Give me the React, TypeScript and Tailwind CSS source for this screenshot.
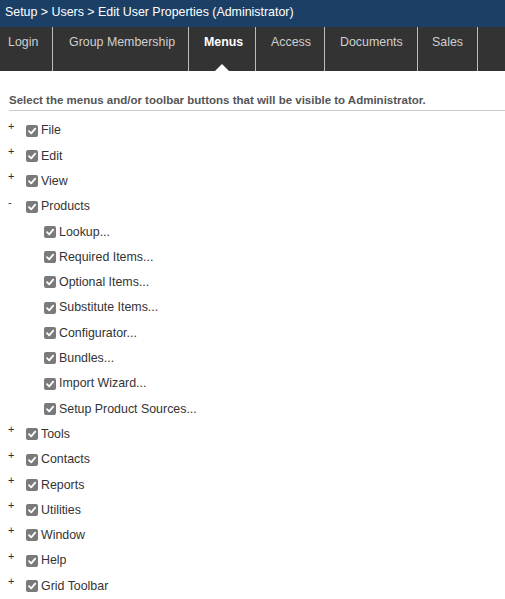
import React from "react";

const tabs = [
  { label: "Login", w: 52, pl: 8 },
  { label: "Group Membership", w: 135, pl: 16 },
  { label: "Menus", w: 66, pl: 15, active: true },
  { label: "Access", w: 68, pl: 15 },
  { label: "Documents", w: 92, pl: 15 },
  { label: "Sales", w: 59, pl: 14 },
];

const before = ["File", "Edit", "View"];
const subs = [
  "Lookup...",
  "Required Items...",
  "Optional Items...",
  "Substitute Items...",
  "Configurator...",
  "Bundles...",
  "Import Wizard...",
  "Setup Product Sources...",
];
const after = ["Tools", "Contacts", "Reports", "Utilities", "Window", "Help", "Grid Toolbar"];

function Check() {
  return (
    <span className="inline-flex w-[12px] h-[12px] rounded-[2px] bg-[#7a7a7a] items-center justify-center shrink-0">
      <svg width="10" height="10" viewBox="0 0 10 10">
        <path d="M2 5.2 L4.2 7.4 L8.2 2.6" stroke="white" strokeWidth="1.8" fill="none" strokeLinecap="round" strokeLinejoin="round" />
      </svg>
    </span>
  );
}

function Row({ label, sign, sub }: { label: string; sign?: string; sub?: boolean }) {
  return (
    <div className="flex items-center h-[25.3px]">
      {sub ? (
        <span className="w-[44px] shrink-0" />
      ) : (
        <span className="w-[26px] shrink-0 pl-[8px] relative">
          <span className="absolute left-[8px] top-[-11px] text-[11px] leading-[12px] text-[#333]">{sign}</span>
        </span>
      )}
      <Check />
      <span className="ml-[3px] text-[12.4px] text-[#333]">{label}</span>
    </div>
  );
}

export default function App() {
  return (
    <div className="w-[505px] h-[599px] bg-white overflow-hidden" style={{ fontFamily: '"Liberation Sans", Arial, sans-serif' }}>
      <div className="h-[27px] bg-[#1c3f66] text-white text-[12.4px] leading-[16px] pl-[5px] pt-[4px]">
        Setup &gt; Users &gt; Edit User Properties (Administrator)
      </div>
      <div className="h-[44px] bg-[#333333] flex">
        {tabs.map((t) => (
          <div
            key={t.label}
            className="relative h-full border-r border-[#bdbdbd] box-content shrink-0"
            style={{ width: t.w }}
          >
            <div
              className={
                "text-[12.4px] leading-[16px] pt-[7px] " +
                (t.active ? "text-white font-bold" : "text-[#cfcfcf]")
              }
              style={{ paddingLeft: t.pl }}
            >
              {t.label}
            </div>
            {t.active && (
              <div className="absolute bottom-0 left-1/2 -translate-x-1/2 w-0 h-0 border-l-[7px] border-r-[7px] border-b-[7px] border-l-transparent border-r-transparent border-b-white" />
            )}
          </div>
        ))}
      </div>
      <div className="pl-[9px] pt-[22px]">
        <div className="text-[11.5px] leading-[15px] font-bold text-[#555] pb-[2px] border-b border-[#cccccc]">
          Select the menus and/or toolbar buttons that will be visible to Administrator.
        </div>
      </div>
      <div className="pt-[7px]">
        {before.map((l) => (
          <Row key={l} label={l} sign="+" />
        ))}
        <Row label="Products" sign="-" />
        {subs.map((l) => (
          <Row key={l} label={l} sub />
        ))}
        {after.map((l) => (
          <Row key={l} label={l} sign="+" />
        ))}
      </div>
    </div>
  );
}
